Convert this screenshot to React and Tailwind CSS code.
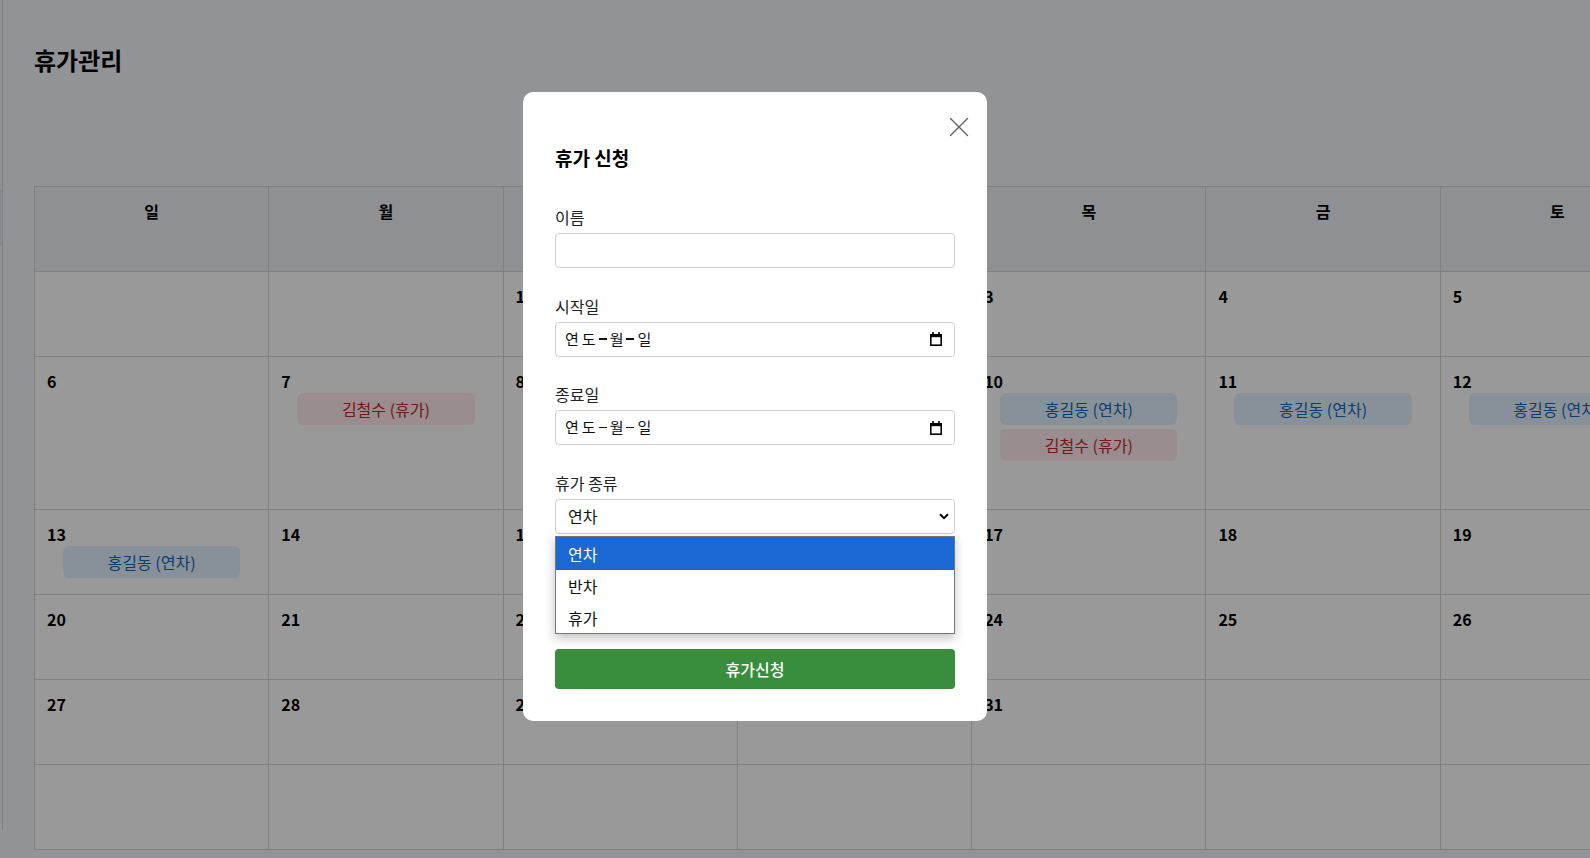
import { X } from "lucide-react";

const DAYS = ["일", "월", "화", "수", "목", "금", "토"];

const WEEKS = [
  [null, null, 1, 2, 3, 4, 5],
  [6, 7, 8, 9, 10, 11, 12],
  [13, 14, 15, 16, 17, 18, 19],
  [20, 21, 22, 23, 24, 25, 26],
  [27, 28, 29, 30, 31, null, null],
  [null, null, null, null, null, null, null],
];

const EVENTS = {
  7: [{ name: "김철수", type: "휴가" }],
  8: [{ name: "김철수", type: "휴가" }],
  9: [{ name: "김철수", type: "휴가" }],
  10: [
    { name: "홍길동", type: "연차" },
    { name: "김철수", type: "휴가" },
  ],
  11: [{ name: "홍길동", type: "연차" }],
  12: [{ name: "홍길동", type: "연차" }],
  13: [{ name: "홍길동", type: "연차" }],
};

function Badge({ name, type }) {
  const isLeave = type === "휴가";
  return (
    <div
      className={
        isLeave
          ? "mx-7 mb-1 flex h-8 items-center justify-center whitespace-nowrap rounded-md bg-[#ffebee] text-[16px] text-[#c62828]"
          : "mx-7 mb-1 flex h-8 items-center justify-center whitespace-nowrap rounded-md bg-[#e3f2fd] text-[16px] text-[#1565c0]"
      }
    >
      {name} ({type})
    </div>
  );
}

function CalendarIcon() {
  return (
    <svg width="12" height="14" viewBox="0 0 12 14">
      <path d="M3 0v3M9 0v3" stroke="#000" strokeWidth="1.6" />
      <rect x="0.8" y="2.8" width="10.4" height="10.4" fill="none" stroke="#000" strokeWidth="1.6" />
      <rect x="0" y="2" width="12" height="3.2" fill="#000" />
    </svg>
  );
}

function DateField() {
  return (
    <div className="flex h-[35px] items-center justify-between rounded-[4px] border border-[#cfcfcf] pl-[9px] pr-[12px]">
      <span className="flex items-center text-[15px] text-[#111]">
        <span>연</span>
        <span className="ml-[3px]">도</span>
        <span className="mx-[3px] inline-block h-[1.2px] w-[8px] bg-[#111]" />
        <span>월</span>
        <span className="mx-[3px] inline-block h-[1.2px] w-[8px] bg-[#111]" />
        <span>일</span>
      </span>
      <CalendarIcon />
    </div>
  );
}

function Label({ children }) {
  return <div className="mb-[5px] text-[16px] leading-[22px] text-[#222]">{children}</div>;
}

export default function App() {
  return (
    <div className="relative h-[858px] w-full overflow-hidden bg-[#f3f5fa] font-['Noto_Sans_CJK_KR','Noto_Sans',sans-serif] text-black">
      <div className="flex h-full">
        <aside className="relative h-[830px] w-[3px] shrink-0 border-r border-[#d8d8d8]">
          <div className="mt-[189px] h-[57px] w-[2px] bg-[#dfe7f3]" />
        </aside>

        <main className="pl-[31px]">
          <h1 className="pt-[42px] text-[24px] font-bold leading-9">휴가관리</h1>

          <div className="mt-[108px] grid w-[1641px] grid-cols-7 grid-rows-[85px_85px_153px_85px_85px_85px_85px] border-l border-t border-[#d5d5d5]">
            {DAYS.map((d) => (
              <div
                key={d}
                className="border-b border-r border-[#d5d5d5] bg-[#eef0f7] pt-[12px] text-center text-[16px] font-bold leading-6"
              >
                {d}
              </div>
            ))}
            {WEEKS.flat().map((day, i) => (
              <div key={i} className="border-b border-r border-[#d5d5d5] bg-white">
                {day && (
                  <>
                    <div className="pl-[12px] pt-[12px] text-[16px] font-bold leading-[24px]">{day}</div>
                    {(EVENTS[day] || []).map((ev, j) => (
                      <Badge key={j} {...ev} />
                    ))}
                  </>
                )}
              </div>
            ))}
          </div>
        </main>
      </div>

      <div className="absolute inset-0 bg-black/40" />

      <div className="absolute left-[523px] top-[92px] w-[464px] rounded-[10px] bg-white px-8 pb-8 pt-8">
        <button className="absolute right-[11px] top-[18px] text-[#666]">
          <X size={34} strokeWidth={1} />
        </button>

        <h2 className="mt-[20px] text-[19px] font-bold leading-[27px]">휴가 신청</h2>

        <div className="mt-[35px]">
          <Label>이름</Label>
          <div className="h-[35px] rounded-[4px] border border-[#cfcfcf]" />
        </div>

        <div className="mt-[26.5px]">
          <Label>시작일</Label>
          <DateField />
        </div>

        <div className="mt-[26.5px]">
          <Label>종료일</Label>
          <DateField />
        </div>

        <div className="relative mt-[26.5px]">
          <Label>휴가 종류</Label>
          <div className="flex h-[35px] items-center justify-between rounded-[4px] border border-[#cfcfcf] pl-3 pr-[5px]">
            <span className="text-[16px] text-[#111]">연차</span>
            <svg width="10" height="7" viewBox="0 0 10 7">
              <path d="M1 1.2l4 4 4-4" fill="none" stroke="#000" strokeWidth="2" />
            </svg>
          </div>
        </div>

        <div className="mt-[26.5px]">
          <Label>사유</Label>
          <div className="h-[35px] rounded-[4px] border border-[#cfcfcf]" />
        </div>

        <button className="mt-[26.5px] flex h-10 w-full items-center justify-center rounded-[4px] bg-[#388e3c] text-[16px] font-medium text-white">
          휴가신청
        </button>

        <ul className="absolute left-8 top-[444px] w-[400px] border border-[#767676] bg-white text-[16px] text-[#111] shadow-[0_4px_10px_rgba(0,0,0,0.25)]">
          <li className="flex h-[33px] items-center bg-[#1b67d3] pl-3 text-white">연차</li>
          <li className="flex h-[32px] items-center pl-3">반차</li>
          <li className="flex h-[31px] items-center pl-3">휴가</li>
        </ul>
      </div>
    </div>
  );
}
